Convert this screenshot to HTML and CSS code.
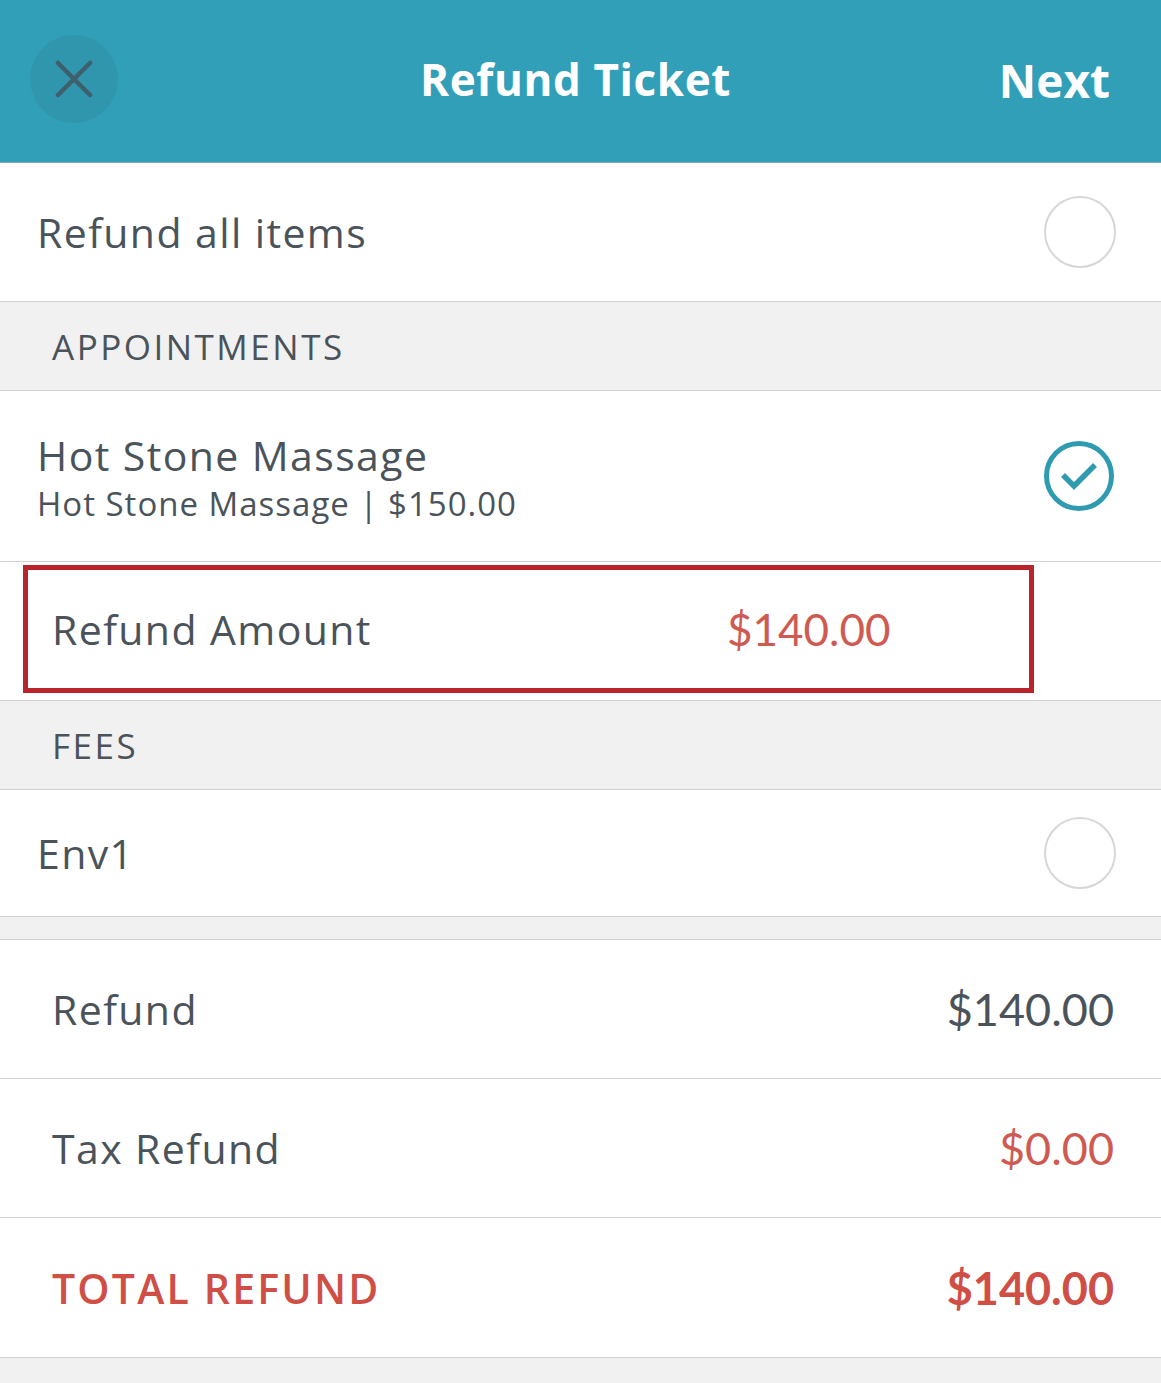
FILE: index.html
```html
<!DOCTYPE html>
<html lang="en">
<head>
    <meta charset="UTF-8">
    <meta name="viewport" content="width=device-width, initial-scale=1.0">
    <title>Refund Ticket</title>
    <link rel="stylesheet" href="styles.css">
</head>
<body>

<div class="header">
    <button class="close-btn" aria-label="Close">
        <svg width="38" height="38" viewBox="0 0 38 38">
            <path d="M3 3 L35 35 M35 3 L3 35" stroke="#3f5f6d" stroke-width="4.5" stroke-linecap="round" fill="none"/>
        </svg>
    </button>
    <h1 class="title">Refund Ticket</h1>
    <span class="next">Next</span>
</div>

<div class="row row-all">
    <span class="label">Refund all items</span>
    <span class="radio"></span>
</div>

<div class="section">APPOINTMENTS</div>

<div class="row row-item">
    <div class="item-text">
        <div class="label">Hot Stone Massage</div>
        <div class="sub">Hot Stone Massage | $150.00</div>
    </div>
    <svg class="check" width="72" height="72" viewBox="0 0 72 72">
        <circle cx="36" cy="36" r="32.5" stroke="#2f9bb0" stroke-width="5" fill="none"/>
        <path d="M20 35 L31 46 L52 25" stroke="#2f9bb0" stroke-width="5.5" fill="none"/>
    </svg>
</div>

<div class="row row-amount">
    <div class="amount-box">
        <span class="label">Refund Amount</span>
        <span class="amount">$140.00</span>
    </div>
</div>

<div class="section">FEES</div>

<div class="row row-fee">
    <span class="label">Env1</span>
    <span class="radio"></span>
</div>

<div class="spacer"></div>

<div class="row row-sum">
    <span class="label">Refund</span>
    <span class="value">$140.00</span>
</div>
<div class="row row-sum">
    <span class="label">Tax Refund</span>
    <span class="value red">$0.00</span>
</div>
<div class="row row-sum row-total">
    <span class="label">TOTAL REFUND</span>
    <span class="value">$140.00</span>
</div>

<div class="footer"></div>

</body>
</html>
```

FILE: styles.css
```css
body {
    margin: 0;
    padding: 0;
    font-family: "Open Sans", Lato, sans-serif;
    background-color: #f1f1f1;
    color: #4b535a;
}
.header {
    height: 162px;
    background-color: #319fb7;
    border-bottom: 1px solid #7fa8b5;
    display: flex;
    align-items: center;
    justify-content: space-between;
    padding: 0 51px 0 30px;
    position: relative;
}
.close-btn {
    width: 88px;
    height: 88px;
    border-radius: 50%;
    border: none;
    background-color: rgba(40, 90, 110, 0.12);
    display: flex;
    align-items: center;
    justify-content: center;
    padding: 0;
    margin-top: -4px;
}
.title {
    position: absolute;
    left: 0;
    right: 10px;
    top: 49px;
    margin: 0;
    text-align: center;
    color: white;
    font-size: 44px;
    font-weight: 700;
    letter-spacing: 0.6px;
    pointer-events: none;
}
.next {
    color: white;
    font-size: 46px;
    font-weight: 700;
    margin-top: -2px;
}
.row {
    background-color: white;
    border-bottom: 1px solid #cfcfcf;
    display: flex;
    align-items: center;
    justify-content: space-between;
    box-sizing: border-box;
    padding: 0 45px 0 37px;
}
.label {
    font-size: 41px;
    font-weight: 400;
    letter-spacing: 1.4px;
    color: #4b535a;
}
.row-all {
    height: 139px;
}
.radio {
    width: 68px;
    height: 68px;
    border-radius: 50%;
    border: 2px solid #d7d7d7;
}
.section {
    height: 89px;
    border-bottom: 1px solid #cfcfcf;
    box-sizing: border-box;
    display: flex;
    align-items: center;
    padding-left: 52px;
    font-size: 35px;
    letter-spacing: 2.5px;
    color: #4b535a;
    background-color: #f1f1f1;
}
.row-item {
    height: 171px;
    padding-right: 46px;
}
.item-text {
    margin-top: 0;
}
.sub {
    font-size: 33px;
    letter-spacing: 1px;
    color: #4b535a;
    margin-top: -2px;
}
.row-amount {
    height: 139px;
    padding: 0 0 0 23px;
}
.amount-box {
    width: 1011px;
    height: 128px;
    margin-top: -5px;
    box-sizing: border-box;
    border: 5px solid #b9232b;
    display: flex;
    align-items: center;
    padding-left: 24px;
}
.amount-box .label {
    width: 675px;
}
.amount {
    font-family: Lato, "Open Sans", sans-serif;
    font-size: 44px;
    color: #cf5a52;
}
.row-fee {
    height: 127px;
}
.spacer {
    height: 22px;
    background-color: #f1f1f1;
    border-bottom: 1px solid #cfcfcf;
}
.row-sum {
    height: 139px;
    padding: 0 47px 0 52px;
}
.value {
    font-family: Lato, "Open Sans", sans-serif;
    font-size: 45px;
    color: #4b535a;
}
.red {
    color: #cf5a52;
}
.row-total {
    height: 140px;
}
.row-total .label {
    color: #cf4f47;
    font-weight: 600;
    letter-spacing: 2.2px;
}
.row-total .value {
    color: #cf4f47;
    font-weight: 700;
}
.footer {
    height: 25px;
    background-color: #f1f1f1;
}
```
